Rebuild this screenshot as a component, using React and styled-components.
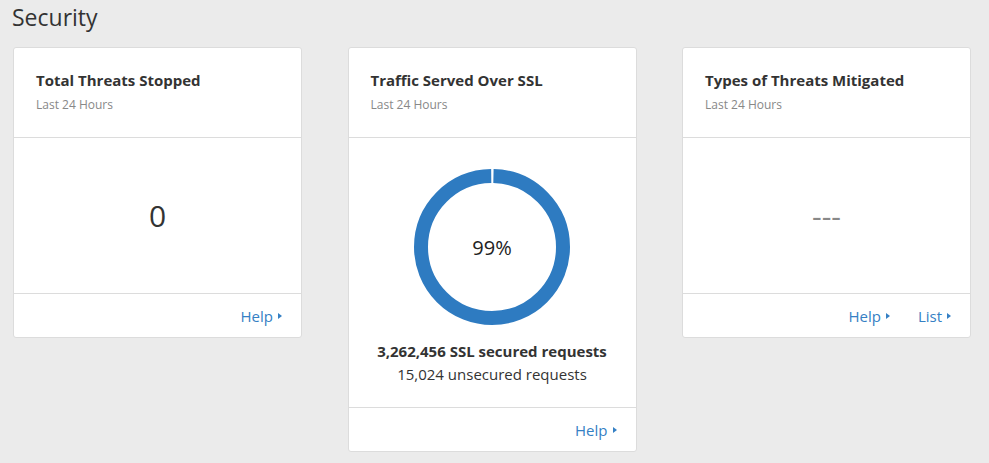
import styled, { createGlobalStyle } from "styled-components";

const GlobalStyle = createGlobalStyle`
    html, body {
        margin: 0;
        padding: 0;
        background: #ebebeb;
        font-family: "Open Sans", "Liberation Sans", sans-serif;
        color: #333;
    }
`;

const Page = styled.div`
    padding: 2px 0 20px 13px;
`;

const PageTitle = styled.h1`
    margin: 0 0 14px -1px;
    font-size: 23px;
    font-weight: 400;
    line-height: 31px;
    color: #333;
`;

const CardRow = styled.div`
    display: flex;
    align-items: flex-start;
    gap: 45.5px;
`;

const Card = styled.div`
    width: 289px;
    box-sizing: border-box;
    background: #fff;
    border: 1px solid #dcdcdc;
    border-radius: 3px;
    display: flex;
    flex-direction: column;
`;

const CardHeader = styled.div`
    height: 90px;
    box-sizing: border-box;
    padding: 22px 22px 0;
    border-bottom: 1px solid #dcdcdc;
`;

const CardTitle = styled.div`
    font-size: 15px;
    font-weight: 700;
    line-height: 20px;
    color: #333;
`;

const CardSubtitle = styled.div`
    margin-top: 7px;
    font-size: 12px;
    line-height: 16px;
    color: #888;
`;

const CardBody = styled.div`
    height: ${(p) => p.$height}px;
    box-sizing: border-box;
    border-bottom: 1px solid #dcdcdc;
    display: flex;
    flex-direction: column;
    align-items: center;
    justify-content: ${(p) => (p.$top ? "flex-start" : "center")};
    padding-top: ${(p) => (p.$top ? 30 : 0)}px;
`;

const BigValue = styled.div`
    font-size: 30px;
    line-height: 40px;
    color: ${(p) => (p.$muted ? "#888" : "#333")};
`;

const Donut = styled.div`
    position: relative;
    width: 158px;
    height: 158px;
    svg {
        display: block;
    }
`;

const DonutLabel = styled.div`
    position: absolute;
    inset: 0;
    display: flex;
    align-items: center;
    justify-content: center;
    font-size: 20px;
    color: #222;
`;

const StatStrong = styled.div`
    margin-top: 14px;
    font-size: 15px;
    font-weight: 700;
    line-height: 23px;
    color: #333;
`;

const Stat = styled.div`
    font-size: 15px;
    line-height: 23px;
    color: #333;
`;

const CardFooter = styled.div`
    height: 43px;
    display: flex;
    align-items: center;
    justify-content: flex-end;
    gap: 28px;
    padding-right: 19px;
`;

const FooterLink = styled.a`
    display: inline-flex;
    align-items: center;
    font-size: 15px;
    color: #3580c4;
    text-decoration: none;
    cursor: pointer;
    &::after {
        content: "";
        margin-left: 5px;
        width: 0;
        height: 0;
        border-top: 3px solid transparent;
        border-bottom: 3px solid transparent;
        border-left: 4px solid #3580c4;
    }
`;

function SslDonut({ percent }) {
    const r = 71;
    const c = 2 * Math.PI * r;
    const gap = 3;
    return (
        <Donut>
            <svg width="158" height="158" viewBox="0 0 158 158">
                <circle
                    cx="79"
                    cy="79"
                    r={r}
                    fill="none"
                    stroke="#2e7bc1"
                    strokeWidth="14"
                    strokeDasharray={`${c - gap} ${gap}`}
                    strokeDashoffset={-gap / 2}
                    transform="rotate(-90 79 79)"
                />
            </svg>
            <DonutLabel>{percent}%</DonutLabel>
        </Donut>
    );
}

function App() {
    return (
        <Page>
            <GlobalStyle />
            <PageTitle>Security</PageTitle>
            <CardRow>
                <Card>
                    <CardHeader>
                        <CardTitle>Total Threats Stopped</CardTitle>
                        <CardSubtitle>Last 24 Hours</CardSubtitle>
                    </CardHeader>
                    <CardBody $height={156}>
                        <BigValue>0</BigValue>
                    </CardBody>
                    <CardFooter>
                        <FooterLink>Help</FooterLink>
                    </CardFooter>
                </Card>
                <Card>
                    <CardHeader>
                        <CardTitle>Traffic Served Over SSL</CardTitle>
                        <CardSubtitle>Last 24 Hours</CardSubtitle>
                    </CardHeader>
                    <CardBody $height={270} $top>
                        <SslDonut percent={99} />
                        <StatStrong>3,262,456 SSL secured requests</StatStrong>
                        <Stat>15,024 unsecured requests</Stat>
                    </CardBody>
                    <CardFooter>
                        <FooterLink>Help</FooterLink>
                    </CardFooter>
                </Card>
                <Card>
                    <CardHeader>
                        <CardTitle>Types of Threats Mitigated</CardTitle>
                        <CardSubtitle>Last 24 Hours</CardSubtitle>
                    </CardHeader>
                    <CardBody $height={156}>
                        <BigValue $muted>---</BigValue>
                    </CardBody>
                    <CardFooter>
                        <FooterLink>Help</FooterLink>
                        <FooterLink>List</FooterLink>
                    </CardFooter>
                </Card>
            </CardRow>
        </Page>
    );
}

export default App;
